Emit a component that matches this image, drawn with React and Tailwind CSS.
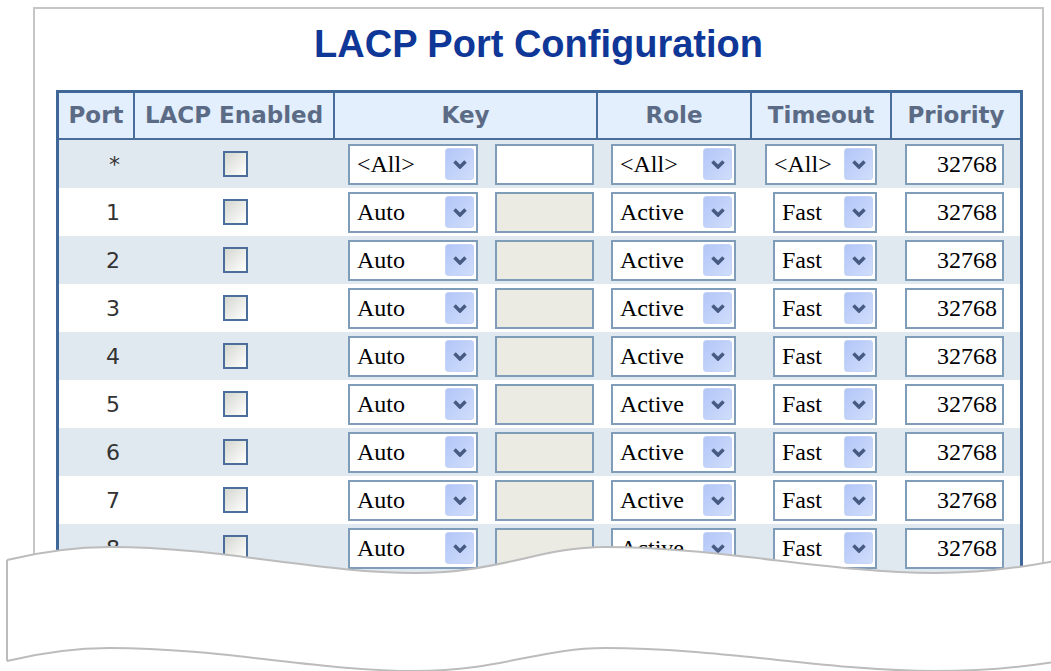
import React from 'react'

const PORTS = ['*', '1', '2', '3', '4', '5', '6', '7', '8', '9']

function Chevron() {
  return (
    <svg width="14" height="9" viewBox="0 0 14 9">
      <path d="M1.5 1.5 L7 7 L12.5 1.5" fill="none" stroke="#475b82" strokeWidth="3.5" />
    </svg>
  )
}

function Select({ value, width }) {
  return (
    <div className={`flex items-center justify-between h-[41px] border-2 border-[#7f9db9] bg-white pl-[7px] pr-[2px] ${width}`}>
      <span className="font-['Liberation_Serif',serif] text-[24px] leading-none text-black">{value}</span>
      <span className="w-[29px] h-[32px] rounded-[3px] border border-[#c5d4f6] bg-gradient-to-br from-[#b2c6f7] to-[#d0ddfb] flex items-center justify-center">
        <Chevron />
      </span>
    </div>
  )
}

function TextBox({ value, disabled }) {
  return (
    <div className={`w-[99px] h-[41px] border-2 border-[#7f9db9] flex items-center justify-end pr-[5px] ${disabled ? 'bg-[#ebebe4]' : 'bg-white'}`}>
      <span className="font-['Liberation_Serif',serif] text-[24px] leading-none text-black">{value}</span>
    </div>
  )
}

function Checkbox() {
  return <div className="w-[25px] h-[26px] border-2 border-[#4b6e9a] bg-gradient-to-br from-[#d6d6d0] to-white" />
}

const headerCell = "h-full flex items-center justify-center border-r-2 border-[#4a6e9b]"

export default function App() {
  return (
    <div className="relative w-[1051px] h-[671px] overflow-hidden bg-white">
      <div className="ml-[33px] mt-[7px] w-[1011px] h-[720px] border-2 border-b-0 border-[#c6c6c6]">
        <h1 className="mt-[16px] text-center font-['Liberation_Sans',Arial,sans-serif] font-bold text-[38px] leading-[38px] text-[#0f3797]">
          LACP Port Configuration
        </h1>

        <div className="ml-[21px] mt-[27px] w-[967px] border-[3px] border-[#3f6898]">
          {/* Header */}
          <div className="flex h-[47px] bg-[#e3effc] border-b-2 border-[#4a6e9b] font-['DejaVu_Sans',Verdana,sans-serif] font-bold text-[23px] text-[#5b6b85]">
            <div className={`w-[76px] ${headerCell}`}>Port</div>
            <div className={`w-[200px] ${headerCell}`}>LACP Enabled</div>
            <div className={`w-[263px] ${headerCell}`}>Key</div>
            <div className={`w-[154px] ${headerCell}`}>Role</div>
            <div className={`w-[140px] ${headerCell}`}>Timeout</div>
            <div className="w-[128px] h-full flex items-center justify-center">Priority</div>
          </div>

          {/* Rows */}
          {PORTS.map((p, i) => {
            const all = p === '*'
            return (
              <div key={p} className={`flex items-center h-[48px] ${i % 2 === 0 ? 'bg-[#e0e8f0]' : 'bg-white'}`}>
                <div className="w-[76px] pr-[15px] text-right font-['DejaVu_Sans',Verdana,sans-serif] text-[22px] text-[#333]">{p}</div>
                <div className="w-[200px] pl-[88px]"><Checkbox /></div>
                <div className="w-[263px] pl-[13px] flex gap-[17px]">
                  <Select value={all ? '<All>' : 'Auto'} width="w-[130px]" />
                  <TextBox value="" disabled={!all} />
                </div>
                <div className="w-[154px] pl-[13px]">
                  <Select value={all ? '<All>' : 'Active'} width="w-[125px]" />
                </div>
                <div className={`w-[140px] ${all ? 'pl-[13px]' : 'pl-[21px]'}`}>
                  <Select value={all ? '<All>' : 'Fast'} width={all ? 'w-[112px]' : 'w-[104px]'} />
                </div>
                <div className="w-[128px] pl-[13px]">
                  <TextBox value="32768" />
                </div>
              </div>
            )
          })}
        </div>
      </div>

      {/* torn paper edge */}
      <svg className="absolute inset-0 pointer-events-none" width="1051" height="671" viewBox="0 0 1051 671">
        <path
          d="M7,560 C40,552 70,547 110,547 C220,547 320,573 415,573 C500,573 540,547 605,547 C720,547 830,573 935,573 C990,573 1030,566 1060,560 L1060,680 L7,680 Z"
          fill="#fff"
        />
        <path
          d="M7,560 C40,552 70,547 110,547 C220,547 320,573 415,573 C500,573 540,547 605,547 C720,547 830,573 935,573 C990,573 1030,566 1060,560"
          fill="none" stroke="#bcbcbc" strokeWidth="2"
        />
        <path
          d="M7,661 C40,653 70,648 110,648 C220,648 320,671 415,671 C500,671 540,648 605,648 C720,648 830,671 935,671 C990,671 1030,666 1060,661"
          fill="none" stroke="#bcbcbc" strokeWidth="2"
        />
        <path d="M7,560 L7,661" stroke="#bcbcbc" strokeWidth="2" />
      </svg>
    </div>
  )
}
